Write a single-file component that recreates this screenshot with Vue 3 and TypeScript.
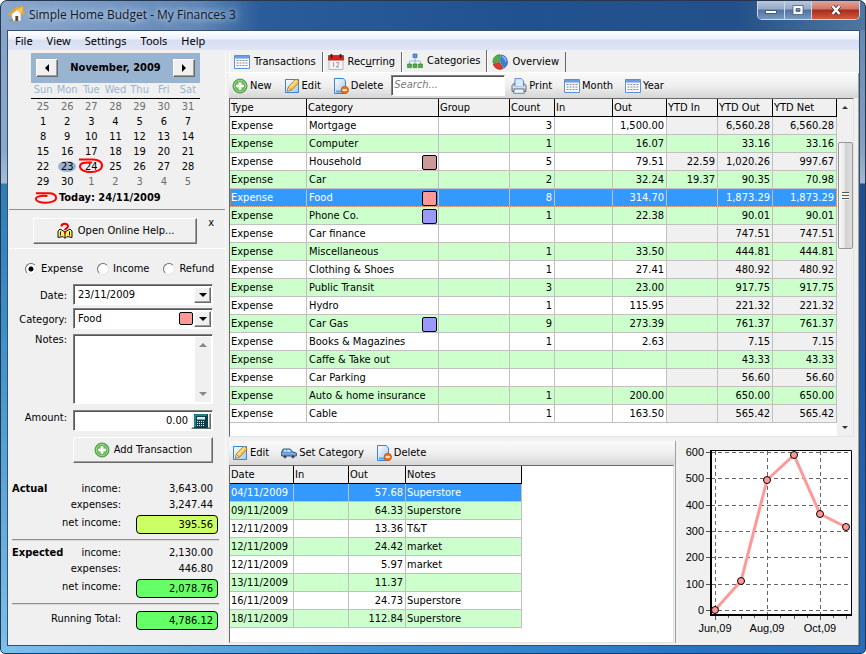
<script setup lang="ts">
import { computed, ref } from 'vue'

interface CategoryRow {
  name: string
  color?: string
  count: string
  out: string
  ytdIn: string
  ytdOut: string
  ytdNet: string
}

interface Entry {
  date: string
  out: string
  notes: string
}

interface Day {
  n: number
  other: boolean
}

const menus = ['File', 'View', 'Settings', 'Tools', 'Help']
const tabs = [
  { id: 'transactions', label: 'Transactions', icon: 'grid' },
  { id: 'recurring', label: 'Recurring', icon: 'calendar' },
  { id: 'categories', label: 'Categories', icon: 'tree' },
  { id: 'overview', label: 'Overview', icon: 'pie' },
]
const activeTab = ref('categories')

const weekdays = ['Sun', 'Mon', 'Tue', 'Wed', 'Thu', 'Fri', 'Sat']
const weeks = computed<Day[][]>(() => {
  const start = new Date(2009, 9, 25)
  return Array.from({ length: 6 }, (_, w) =>
    Array.from({ length: 7 }, (_, d) => {
      const day = new Date(start.getFullYear(), start.getMonth(), start.getDate() + w * 7 + d)
      return { n: day.getDate(), other: day.getMonth() !== 10 }
    }),
  )
})

const kind = ref('Expense')
const notes = ref('')
const amount = ref('0.00')
const search = ref('')
const selectedCategory = ref(4)
const selectedEntry = ref(0)

const row = (name: string, count: string, out: string, ytdIn: string, ytdOut: string, ytdNet: string, color?: string): CategoryRow => ({
  name, count, out, ytdIn, ytdOut, ytdNet, color,
})

const categories: CategoryRow[] = [
  row('Mortgage', '3', '1,500.00', '', '6,560.28', '6,560.28'),
  row('Computer', '1', '16.07', '', '33.16', '33.16'),
  row('Household', '5', '79.51', '22.59', '1,020.26', '997.67', '#cc9999'),
  row('Car', '2', '32.24', '19.37', '90.35', '70.98'),
  row('Food', '8', '314.70', '', '1,873.29', '1,873.29', '#ff9999'),
  row('Phone Co.', '1', '22.38', '', '90.01', '90.01', '#9999ff'),
  row('Car finance', '', '', '', '747.51', '747.51'),
  row('Miscellaneous', '1', '33.50', '', '444.81', '444.81'),
  row('Clothing & Shoes', '1', '27.41', '', '480.92', '480.92'),
  row('Public Transit', '3', '23.00', '', '917.75', '917.75'),
  row('Hydro', '1', '115.95', '', '221.32', '221.32'),
  row('Car Gas', '9', '273.39', '', '761.37', '761.37', '#9999ff'),
  row('Books & Magazines', '1', '2.63', '', '7.15', '7.15'),
  row('Caffe & Take out', '', '', '', '43.33', '43.33'),
  row('Car Parking', '', '', '', '56.60', '56.60'),
  row('Auto & home insurance', '1', '200.00', '', '650.00', '650.00'),
  row('Cable', '1', '163.50', '', '565.42', '565.42'),
]

const entries: Entry[] = [
  { date: '04/11/2009', out: '57.68', notes: 'Superstore' },
  { date: '09/11/2009', out: '64.33', notes: 'Superstore' },
  { date: '12/11/2009', out: '13.36', notes: 'T&T' },
  { date: '12/11/2009', out: '24.42', notes: 'market' },
  { date: '12/11/2009', out: '5.97', notes: 'market' },
  { date: '13/11/2009', out: '11.37', notes: '' },
  { date: '16/11/2009', out: '24.73', notes: 'Superstore' },
  { date: '18/11/2009', out: '112.84', notes: 'Superstore' },
]

const ticks = [
  { v: 600, y: 11 },
  { v: 500, y: 37 },
  { v: 400, y: 64 },
  { v: 300, y: 90 },
  { v: 200, y: 116 },
  { v: 100, y: 143 },
  { v: 0, y: 169 },
]
const months = [
  { label: 'Jun,09', x: 39 },
  { label: 'Aug,09', x: 91 },
  { label: 'Oct,09', x: 144 },
]
const points = [[39, 169], [65, 140], [91, 39], [118, 14], [144, 73], [170, 86]]
const line = points.map((p) => p.join(',')).join(' ')
</script>

<template>
  <svg class="sprite" aria-hidden="true">
    <defs>
      <linearGradient id="pg" x1="0" y1="0" x2="1" y2="1">
        <stop offset="0" stop-color="#fff" /><stop offset="1" stop-color="#9cc8f4" />
      </linearGradient>
      <radialGradient id="gg">
        <stop offset="0" stop-color="#9fdc8c" /><stop offset="1" stop-color="#4ba03c" />
      </radialGradient>
    </defs>
    <symbol id="i-add" viewBox="0 0 16 16">
      <circle cx="8" cy="8" r="7" fill="url(#gg)" stroke="#4a9a42" />
      <circle cx="8" cy="8" r="5.8" fill="none" stroke="#b8e6aa" stroke-width=".8" />
      <path d="M8 4.2v7.6M4.2 8h7.6" stroke="#fff" stroke-width="2.6" />
    </symbol>
    <symbol id="i-edit" viewBox="0 0 16 16">
      <path d="M1.5 1.5h13v13h-13z" fill="url(#pg)" stroke="#3c82d2" />
      <path d="M3.5 13l1-4.2L12 1l3.2 3L8 11.8z" fill="#fcc64a" stroke="#b3761c" stroke-width=".9" />
      <path d="M5.5 9.8l7.4-7.6" stroke="#fff0b0" stroke-width="1.2" />
      <path d="M3.2 13.2l1.1-4 3 2.8z" fill="#f7e3bf" stroke="#8b6a33" stroke-width=".6" />
    </symbol>
    <symbol id="i-delete" viewBox="0 0 16 16">
      <path d="M1.5.5h8.8l2.2 2.6v12.4h-11z" fill="url(#pg)" stroke="#3c82d2" />
      <path d="M3 12.5h6v2H3z" fill="#5c9fe4" />
      <circle cx="11.8" cy="12" r="3.7" fill="#ee7422" stroke="#c4500f" stroke-width=".8" />
      <path d="M9.6 12h4.4" stroke="#fff" stroke-width="1.5" />
    </symbol>
    <symbol id="i-grid" viewBox="0 0 16 16">
      <path d="M.5 1.5h15v13H.5z" fill="#fff" stroke="#5d8fd4" />
      <path d="M1 2h14v2.6H1z" fill="#6c9de0" />
      <path d="M2.5 6.5h11M2.5 9h11M2.5 11.5h11" stroke="#7d8796" stroke-dasharray="2 1" />
      <path d="M5 5v9M8 5v9M11 5v9" stroke="#d4dbe6" stroke-width=".7" />
    </symbol>
    <symbol id="i-calendar" viewBox="0 0 16 16">
      <path d="M1 5h14v10.5H1z" fill="#f4f4f4" stroke="#aaa" stroke-width=".8" />
      <path d="M.5 1.5h15v4.6H.5z" fill="#d92318" stroke="#8d1009" stroke-width=".6" />
      <path d="M3.5 0v4M12.5 0v4" stroke="#222" stroke-width="1.6" />
      <path d="M5.6 8.2v4.8M8 8.6h2.7v1.6L8.3 13H11" fill="none" stroke="#999" />
    </symbol>
    <symbol id="i-tree" viewBox="0 0 16 16">
      <path d="M8 4v4M2.5 11V8h11v3M8 8v3" fill="none" stroke="#7ea0cf" stroke-dasharray="1.5 .7" />
      <path d="M6 1h4v3.6H6z" fill="#5c9ae0" stroke="#2e63ad" stroke-width=".7" />
      <path d="M.6 11h3.8v3.6H.6zM6.1 11h3.8v3.6H6.1zM11.6 11h3.8v3.6h-3.8z" fill="#58ad4d" stroke="#2f7d2b" stroke-width=".7" />
    </symbol>
    <symbol id="i-pie" viewBox="0 0 16 16">
      <path d="M9 1a7 7 0 0 1 3 13L8.5 8z" fill="#3f7fdc" stroke="#1f4fa0" stroke-width=".6" />
      <path d="M7.6 7.6L1 9A7 7 0 0 1 8 .6z" fill="#4fb04a" stroke="#2b7a2b" stroke-width=".6" />
      <path d="M7.6 8.4l3.6 6.2A7 7 0 0 1 1.2 10z" fill="#dc3a30" stroke="#96150f" stroke-width=".6" />
      <path d="M10 2.5a5.5 5.5 0 0 1 3.8 5" fill="none" stroke="#a8ccff" stroke-width="1.3" />
    </symbol>
    <symbol id="i-print" viewBox="0 0 16 16">
      <path d="M1 7.500l2.300-2.500h9.400L15 7.500v6H1z" fill="#b9bcc6" stroke="#5c6273" stroke-width=".9" />
      <path d="M4 8.500V.6h6.400L12.500 3v5.500z" fill="#d8ecff" stroke="#4c84c6" stroke-width=".9" />
      <path d="M1.500 9h13" stroke="#fff" />
      <path d="M3.6 11h8.800l1 4.300H2.600z" fill="#eef5fd" stroke="#5b7ba5" stroke-width=".9" />
    </symbol>
    <symbol id="i-car" viewBox="0 0 16 16">
      <path d="M.6 11V7l1.600-3h7l2.300 2.800 3.900 1.200v3z" fill="#5f93d0" stroke="#2c4f86" stroke-width=".9" />
      <path d="M2.400 6.800l1-2h2v2zM6.200 6.800v-2h2.400l1.500 2z" fill="#dcebfb" />
      <path d="M1 8.800h13.800" stroke="#9dc1ea" stroke-width=".8" />
      <circle cx="4" cy="11.500" r="1.800" fill="#333c4b" stroke="#9fb0c8" stroke-width=".6" />
      <circle cx="12" cy="11.500" r="1.800" fill="#333c4b" stroke="#9fb0c8" stroke-width=".6" />
    </symbol>
  </svg>

  <div class="window">
    <header class="titlebar">
      <svg class="app-icon" viewBox="0 0 16 16" aria-hidden="true">
        <path d="M3.500 8v7h9.500V7.500L9 3.500z" fill="#fbfbf6" stroke="#9aa0a6" stroke-width=".7" />
        <path d="M.8 9.500L7.500 3 14.500 1l.5 8" fill="none" stroke="#f0a526" stroke-width="2" />
        <path d="M8 4l6-2.500v6z" fill="#f7c65a" />
        <path d="M7.400 10h2.800v5H7.400z" fill="#5a4632" />
        <path d="M1 15.300h4v-3L1 14z" fill="#8a9a7a" />
      </svg>
      <h1>Simple Home Budget - My Finances 3</h1>
      <div class="caption-buttons">
        <button type="button" aria-label="Minimize">
          <svg width="14" height="12"><path d="M1.500 6.500h11v3h-11z" fill="#fff" stroke="#4b5a72" /></svg>
        </button>
        <button type="button" aria-label="Maximize">
          <svg width="14" height="12"><path d="M2 1.500h10v9H2zM5 4.500v3h4v-3z" fill="#fff" fill-rule="evenodd" stroke="#4b5a72" stroke-width=".8" /></svg>
        </button>
        <button type="button" class="close" aria-label="Close">
          <svg width="14" height="12"><path d="M3.500 2l7 8M10.500 2l-7 8" stroke="#54323a" stroke-width="4" /><path d="M3.500 2l7 8M10.500 2l-7 8" stroke="#fff" stroke-width="2.400" /></svg>
        </button>
      </div>
    </header>

    <div class="client">
      <nav class="menu">
        <button v-for="m in menus" :key="m" type="button">{{ m }}</button>
      </nav>

      <div class="body">
        <aside class="side">
          <section class="month">
            <div class="month-head">
              <button type="button" class="raised" aria-label="Previous month"><i class="tri left"></i></button>
              <strong>November, 2009</strong>
              <button type="button" class="raised" aria-label="Next month"><i class="tri right"></i></button>
            </div>
            <table class="days">
              <thead>
                <tr><th v-for="w in weekdays" :key="w" scope="col">{{ w }}</th></tr>
              </thead>
              <tbody>
                <tr v-for="(week, i) in weeks" :key="i">
                  <td v-for="d in week" :key="d.n" :class="{ other: d.other, picked: d.n === 23 }">
                    <span>{{ d.n }}</span>
                    <svg v-if="d.n === 24 && !d.other" class="ring" viewBox="0 0 26 16" aria-hidden="true">
                      <path d="M1 1.500h14c6 0 9 3 9 6 0 4-5 6.500-11 6.500S2 12 2 8.500 6 4 14 4.500" />
                    </svg>
                  </td>
                </tr>
              </tbody>
            </table>
            <div class="today">
              <svg viewBox="0 0 26 16" aria-hidden="true">
                <path d="M2 3h13c6 0 8 2 8 5 0 3-5 5-11 5S2 11 2 9s4-4 12-3" />
              </svg>
              <strong>Today: 24/11/2009</strong>
            </div>
          </section>

          <section class="help">
            <button type="button" class="raised help-button">
              <svg width="18" height="18" viewBox="0 0 18 18" aria-hidden="true">
                <path d="M2 9l2-2 5 3 5-3 2 2v6.500l-5-1-2 2-2-2-5 1z" fill="#ffef5a" stroke="#111" />
                <path d="M9 10v6M4.500 9.500v4M13.500 9.500v4" stroke="#111" />
                <path d="M5.500 4.500C5.500 1 12 1 12 4.300c0 2-3 2-3 4M9 9.500v2" fill="none" stroke="#e00" stroke-width="2" />
              </svg>
              Open Online Help...
            </button>
            <button type="button" class="dismiss" aria-label="Close help">x</button>
          </section>

          <form class="entry" @submit.prevent>
            <div class="kinds">
              <label v-for="k in ['Expense', 'Income', 'Refund']" :key="k">
                <input v-model="kind" type="radio" name="kind" :value="k" />{{ k }}
              </label>
            </div>
            <label for="date">Date:</label>
            <div class="field sunken">
              <select id="date"><option>23/11/2009</option></select>
              <span class="raised drop"><i class="tri down"></i></span>
            </div>
            <label for="category">Category:</label>
            <div class="field sunken">
              <select id="category"><option>Food</option></select>
              <span class="swatch food"></span>
              <span class="raised drop"><i class="tri down"></i></span>
            </div>
            <label for="notes" class="top">Notes:</label>
            <div class="field notes sunken">
              <textarea id="notes" v-model="notes"></textarea>
              <span class="bar"><i class="tri up"></i><i class="tri down"></i></span>
            </div>
            <label for="amount" class="top">Amount:</label>
            <div class="field sunken">
              <input id="amount" v-model="amount" type="text" />
              <button type="button" class="raised calc" aria-label="Calculator">
                <svg width="14" height="14" viewBox="0 0 14 14">
                  <path d="M0 0h14v14H0z" fill="#0a3f49" />
                  <path d="M1 13V1h12" fill="none" stroke="#2ec4cc" />
                  <path d="M3 3h8v2.500H3z" fill="#d5f2f2" />
                  <path d="M3 7.500h8M3 9.500h8M3 11.500h8" stroke="#e8f6f6" stroke-dasharray="1 1" />
                </svg>
              </button>
            </div>
            <button type="submit" class="raised add">
              <svg class="icon"><use href="#i-add" /></svg>Add Transaction
            </button>
          </form>

          <section class="totals">
            <dl>
              <dt><strong>Actual</strong>income:</dt><dd>3,643.00</dd>
              <dt>expenses:</dt><dd>3,247.44</dd>
              <dt>net income:</dt><dd class="pill lime">395.56</dd>
            </dl>
            <dl>
              <dt><strong>Expected</strong>income:</dt><dd>2,130.00</dd>
              <dt>expenses:</dt><dd>446.80</dd>
              <dt>net income:</dt><dd class="pill">2,078.76</dd>
            </dl>
            <dl>
              <dt>Running Total:</dt><dd class="pill">4,786.12</dd>
            </dl>
          </section>
        </aside>

        <main class="main">
          <div class="tabs" role="tablist">
            <button
              v-for="t in tabs" :key="t.id" type="button" role="tab"
              :aria-selected="activeTab === t.id" :class="{ active: activeTab === t.id }" @click="activeTab = t.id"
            >
              <svg class="icon"><use :href="'#i-' + t.icon" /></svg>
              <span v-if="t.id === 'recurring'">Rec<u>u</u>rring</span>
              <span v-else>{{ t.label }}</span>
            </button>
          </div>

          <div class="page">
            <div class="toolbar">
              <button type="button"><svg class="icon"><use href="#i-add" /></svg>New</button>
              <button type="button"><svg class="icon"><use href="#i-edit" /></svg>Edit</button>
              <button type="button"><svg class="icon"><use href="#i-delete" /></svg>Delete</button>
              <input v-model="search" type="text" class="search sunken" placeholder="Search..." aria-label="Search" />
              <button type="button"><svg class="icon"><use href="#i-print" /></svg>Print</button>
              <button type="button"><svg class="icon"><use href="#i-grid" /></svg>Month</button>
              <button type="button"><svg class="icon"><use href="#i-grid" /></svg>Year</button>
            </div>

            <div class="list upper">
              <div class="scroll">
                <table class="grid">
                  <colgroup>
                    <col class="w77" /><col class="w132" /><col class="w71" /><col class="w45" /><col class="w58" />
                    <col class="w54" /><col class="w51" /><col class="w55" /><col class="w64" />
                  </colgroup>
                  <thead>
                    <tr>
                      <th v-for="h in ['Type', 'Category', 'Group', 'Count', 'In', 'Out', 'YTD In', 'YTD Out', 'YTD Net']" :key="h" scope="col">{{ h }}</th>
                    </tr>
                  </thead>
                  <tbody>
                    <tr v-for="(c, i) in categories" :key="c.name" :class="{ selected: i === selectedCategory }" @click="selectedCategory = i">
                      <td>Expense</td>
                      <td class="name"><div class="cat">{{ c.name }}<span v-if="c.color" class="swatch" :style="{ background: c.color }"></span></div></td>
                      <td></td>
                      <td class="num">{{ c.count }}</td>
                      <td></td>
                      <td class="num">{{ c.out }}</td>
                      <td class="num ytd">{{ c.ytdIn }}</td>
                      <td class="num ytd">{{ c.ytdOut }}</td>
                      <td class="num ytd">{{ c.ytdNet }}</td>
                    </tr>
                  </tbody>
                </table>
              </div>
              <div class="scrollbar" aria-hidden="true">
                <i class="tri up"></i>
                <span class="track"><span class="thumb"><i></i></span></span>
                <i class="tri down"></i>
              </div>
            </div>

            <div class="bottom">
              <section class="details">
                <div class="toolbar">
                  <button type="button"><svg class="icon"><use href="#i-edit" /></svg>Edit</button>
                  <button type="button"><svg class="icon"><use href="#i-car" /></svg>Set Category</button>
                  <button type="button"><svg class="icon"><use href="#i-delete" /></svg>Delete</button>
                </div>
                <div class="list">
                  <table class="grid narrow">
                    <colgroup><col class="w64" /><col class="w55" /><col class="w57" /><col class="w116" /></colgroup>
                    <thead>
                      <tr><th v-for="h in ['Date', 'In', 'Out', 'Notes']" :key="h" scope="col">{{ h }}</th></tr>
                    </thead>
                    <tbody>
                      <tr v-for="(e, i) in entries" :key="i" :class="{ selected: i === selectedEntry }" @click="selectedEntry = i">
                        <td>{{ e.date }}</td>
                        <td></td>
                        <td class="num">{{ e.out }}</td>
                        <td>{{ e.notes }}</td>
                      </tr>
                    </tbody>
                  </table>
                </div>
              </section>

              <figure class="chart">
                <svg viewBox="0 0 182 200" role="img" aria-label="Monthly spending on Food">
                  <path d="M34 9h142v165H34z" fill="#fff" />
                  <g stroke="#666" stroke-dasharray="4 3" shape-rendering="crispEdges">
                    <path v-for="t in ticks" :key="t.v" :d="`M35 ${t.y}.5h141`" />
                    <path v-for="m in months" :key="m.x" :d="`M${m.x}.5 10v163`" />
                  </g>
                  <g stroke="#555" shape-rendering="crispEdges">
                    <path v-for="t in ticks" :key="t.v" :d="`M30 ${t.y}.5h5`" />
                    <path d="M39.500 174v5M52.500 174v3M65.500 174v4M78.500 174v3M91.500 174v5M104.500 174v3M118.500 174v4M131.500 174v3M144.500 174v5M157.500 174v3M170.500 174v4" />
                  </g>
                  <path d="M34 9.500h141.500V174" fill="none" stroke="#000" />
                  <path d="M35 9v165h141" fill="none" stroke="#000" stroke-width="2" />
                  <polyline :points="line" fill="none" stroke="#ff9999" stroke-width="3" />
                  <circle v-for="p in points" :key="p[0]" :cx="p[0]" :cy="p[1]" r="3.500" fill="#ff9999" stroke="#000" />
                  <text v-for="t in ticks" :key="t.v" x="28" :y="t.y + 4" text-anchor="end">{{ t.v }}</text>
                  <text v-for="m in months" :key="m.x" :x="m.x" y="191" text-anchor="middle">{{ m.label }}</text>
                </svg>
              </figure>
            </div>
          </div>
        </main>
      </div>
    </div>
  </div>
</template>

<style>
body {
  margin: 0;
  background: #fff;
}
</style>

<style scoped>
* {
  box-sizing: border-box;
}

.sprite {
  position: absolute;
  width: 0;
  height: 0;
}

.window {
  display: flex;
  flex-direction: column;
  min-height: 100vh;
  padding: 0 5px 7px 6px;
  border: 1px solid #26364e;
  border-radius: 7px 7px 5px 5px;
  background:
    linear-gradient(90deg, #8aa8cc 0, #7295c0 120px, #5f86b6 200px, #2a5c9a 260px, #21528f 60%, #23508a 85%, #4f779f) 0 0 / 100% 29px no-repeat,
    linear-gradient(90deg, #7cc0ea, #3d90d6 45%, #2873c2 80%, #2a6cba) 0 100% / 100% 8px no-repeat,
    linear-gradient(#86a3c6, #8aa8cb 150px, #a9bdd6 182px, #2e7db5 183px, #3b8fc8 50%, #7cc0ea) 0 0 / 50% 100% no-repeat,
    linear-gradient(#5d83ae, #86a2c4 150px, #a3b8d1 182px, #1d4f90 183px, #1f5aa5 60%, #2a6cba) 100% 0 / 50% 100% no-repeat;
  color: #000;
  font: 11px/14px "DejaVu Sans Condensed", "DejaVu Sans", sans-serif;
}

button,
input,
select,
textarea {
  margin: 0;
  padding: 0;
  border: 0;
  border-radius: 0;
  outline: 0;
  background: none;
  color: inherit;
  font: inherit;
}

.icon {
  flex: none;
  width: 16px;
  height: 16px;
}

.titlebar {
  display: flex;
  align-items: flex-start;
  height: 29px;
}

.app-icon {
  flex: none;
  width: 16px;
  height: 16px;
  margin: 5px 5px 0 1px;
}

h1 {
  flex: 1;
  margin: 5px 0 0;
  color: #10182a;
  font: 12px/17px "Open Sans", sans-serif;
  text-shadow: 0 0 6px #c9d8ea, 0 0 8px #c9d8ea;
}

.caption-buttons {
  display: flex;
  border: 1px solid #cdd8e6;
  border-top: 0;
  border-radius: 0 0 5px 5px;
  overflow: hidden;
}

.caption-buttons button {
  display: grid;
  place-items: center;
  width: 27px;
  height: 18px;
  border-right: 1px solid #cdd8e6;
  background: linear-gradient(#b9c8dc, #93aac8 45%, #4f729f 50%, #7698c0);
}

.caption-buttons .close {
  width: 47px;
  border-right: 0;
  background: linear-gradient(#dda79c, #cf7565 45%, #a92a1c 50%, #cf5c3c);
}

.client {
  display: flex;
  flex: 1;
  flex-direction: column;
  border: 1px solid #35506f;
  background: #f0f0f0;
}

.menu {
  display: flex;
  gap: 14px;
  height: 19px;
  padding-left: 7px;
  background: linear-gradient(#fff, #eef1fa 40%, #d8dff2 50%, #dfe5f6);
  font: 11px/19px "Noto Sans", sans-serif;
}

.body {
  display: flex;
  flex: 1;
}

.side {
  flex: none;
  width: 218px;
  padding-left: 1px;
  border-right: 1px solid #fafafa;
}

.raised {
  border: 1px solid;
  border-color: #fff #696969 #696969 #fff;
  background: #f0f0f0;
  box-shadow: inset -1px -1px #a0a0a0;
}

.sunken {
  border: 1px solid;
  border-color: #808080 #fff #fff #808080;
  background: #fff;
  box-shadow: inset 1px 1px #555;
}

.tri {
  display: block;
  width: 0;
  height: 0;
  border: 4px solid transparent;
}

.tri.left {
  border-left-width: 0;
  border-right-color: #000;
}

.tri.right {
  border-right-width: 0;
  border-left-color: #000;
}

.tri.down {
  border-bottom-width: 0;
  border-top-color: #000;
}

.tri.up {
  border-top-width: 0;
  border-bottom-color: #000;
}

.month {
  width: 169px;
  margin: 3px 0 0 22px;
}

.month-head {
  display: flex;
  align-items: center;
  justify-content: space-between;
  height: 30px;
  padding: 0 5px;
  background: #99b4d1;
}

.month-head button {
  display: grid;
  place-items: center;
  width: 22px;
  height: 18px;
}

.days {
  width: 169px;
  border-collapse: collapse;
  table-layout: fixed;
}

.days th {
  height: 15px;
  padding: 0;
  border-bottom: 1px solid #000;
  color: #99b4d1;
  font-weight: normal;
  line-height: 14px;
}

.days td {
  position: relative;
  height: 15px;
  padding: 0;
  line-height: 15px;
  text-align: center;
}

.days .other {
  color: #6d6d6d;
}

.days .picked span {
  display: inline-block;
  width: 18px;
  height: 11px;
  border-radius: 50%;
  background: #99b4d1;
  line-height: 11px;
}

.ring {
  position: absolute;
  top: -1px;
  left: -1px;
  width: 26px;
  height: 16px;
}

.ring path,
.today path {
  fill: none;
  stroke: #f00;
  stroke-width: 2;
}

.today {
  display: flex;
  align-items: center;
  height: 18px;
  padding-left: 3px;
}

.today svg {
  width: 25px;
  height: 16px;
}

.help {
  display: flex;
  align-items: flex-start;
  height: 40px;
  margin-top: 2px;
  padding: 8px 0 0 24px;
  border-top: 1px solid #909090;
  border-bottom: 1px solid #fff;
}

.help-button {
  display: flex;
  align-items: center;
  justify-content: center;
  gap: 4px;
  width: 166px;
  height: 26px;
}

.dismiss {
  width: 28px;
  height: 10px;
  line-height: 8px;
}

.entry {
  display: grid;
  grid-template-columns: 58px 140px;
  column-gap: 6px;
  row-gap: 3px;
  padding: 11px 0 0;
  text-align: right;
}

.entry > label {
  padding-top: 5px;
}

.entry > label.top {
  padding-top: 1px;
}

.kinds {
  display: flex;
  grid-column: 1 / -1;
  gap: 14px;
  height: 21px;
  padding: 0 0 3px 16px;
}

.kinds label {
  display: flex;
  align-items: center;
  gap: 4px;
}

.kinds input {
  width: 12px;
  height: 12px;
  border: 1px solid;
  border-color: #707070 #e4e4e4 #e4e4e4 #707070;
  border-radius: 50%;
  background: #fff;
  appearance: none;
}

.kinds input:checked {
  background: radial-gradient(#000 2px, #fff 3px);
}

.field {
  display: flex;
  align-items: stretch;
  height: 21px;
  padding: 2px 1px 1px 2px;
}

.field select,
.field input,
.field textarea {
  flex: 1;
  min-width: 0;
  padding: 0 2px;
  appearance: none;
  resize: none;
}

#amount {
  padding-right: 3px;
  text-align: right;
}

.drop {
  display: grid;
  place-items: center;
  width: 17px;
}

.notes {
  height: 70px;
  margin: 2px 0 3px;
}

.bar {
  display: flex;
  flex-direction: column;
  justify-content: space-between;
  align-items: center;
  width: 16px;
  padding: 6px 0;
  background: #f0f0f0;
}

.bar .up {
  border-bottom-color: #888;
}

.bar .down {
  border-top-color: #888;
}

.calc {
  display: grid;
  place-items: center;
  width: 20px;
}

.swatch {
  flex: none;
  width: 15px;
  height: 15px;
  border: 1px solid #000;
  border-radius: 2px;
}

.swatch.food {
  align-self: center;
  width: 14px;
  height: 13px;
  margin-right: 1px;
  background: #ff9999;
}

.add {
  display: flex;
  grid-column: 2;
  align-items: center;
  justify-content: center;
  gap: 4px;
  height: 26px;
  margin-top: 3px;
}

.totals {
  padding: 18px 6px 0 3px;
}

.totals dl {
  display: grid;
  grid-template-columns: 109px 82px;
  column-gap: 15px;
  align-items: center;
  margin: 0;
  padding-bottom: 5px;
}

.totals dl + dl {
  padding-top: 5px;
  border-top: 1px solid #909090;
  box-shadow: inset 0 1px #d8d8d8;
}

.totals dt {
  display: flex;
  justify-content: flex-end;
  line-height: 16px;
}

.totals dt strong {
  margin-right: auto;
}

.totals dd {
  margin: 0;
  padding-right: 5px;
  line-height: 16px;
  text-align: right;
}

.totals .pill {
  height: 19px;
  margin: 2px 0 0;
  padding-right: 4px;
  border: 1px solid #000;
  border-radius: 4px;
  background: #66ff66;
  line-height: 17px;
}

.totals .lime {
  background: #ccff66;
}

.main {
  display: flex;
  flex: 1;
  flex-direction: column;
  min-width: 0;
}

.tabs {
  display: flex;
  align-items: flex-end;
  height: 23px;
  padding-left: 3px;
  border-bottom: 1px solid #fff;
}

.tabs button {
  display: flex;
  align-items: center;
  gap: 4px;
  height: 20px;
  padding: 0 6px 0 4px;
  border: solid #696969;
  border-width: 0 1px 0 0;
  border-left: 1px solid #fff;
}

.tabs .active {
  align-self: flex-start;
  height: 22px;
}

.page {
  display: flex;
  flex: 1;
  flex-direction: column;
  padding: 0 0 2px 3px;
  border-right: 1px solid #a0a0a0;
}

.toolbar {
  display: flex;
  flex: none;
  align-items: center;
  gap: 12px;
  height: 25px;
  padding: 0 3px;
  background: linear-gradient(#fafafa, #efefef 50%, #d6d6d6);
}

.toolbar button {
  display: flex;
  align-items: center;
  gap: 2px;
  white-space: nowrap;
}

.search {
  width: 114px;
  height: 21px;
  margin: 0 -6px 0 -4px;
  padding: 0 2px 2px;
}

.search::placeholder {
  color: #777;
  font-style: italic;
  opacity: 1;
}

.list {
  flex: 1;
  border: 1px solid;
  border-color: #696969 #e3e3e3 #e3e3e3 #696969;
  background: #fff;
}

.upper {
  display: flex;
  min-height: 339px;
  margin-right: 4px;
}

.scroll {
  flex: 1;
  min-width: 0;
}

.grid {
  width: 100%;
  border-spacing: 0;
  table-layout: fixed;
}

.grid.narrow {
  width: 292px;
}

.w77 { width: 77px; }
.w132 { width: 132px; }
.w71 { width: 71px; }
.w45 { width: 45px; }
.w58 { width: 58px; }
.w54 { width: 54px; }
.w51 { width: 51px; }
.w55 { width: 55px; }
.w57 { width: 57px; }
.w64 { width: 64px; }
.w116 { width: 116px; }

.grid th,
.grid td {
  height: 18px;
  padding: 1px 2px 0 1px;
  line-height: 16px;
  white-space: nowrap;
}

.grid th {
  border-right: 1px solid #000;
  border-bottom: 1px solid #000;
  background: #f0f0f0;
  font-weight: normal;
  text-align: left;
}

.grid td {
  border-right: 1px solid #c0c0c0;
  border-bottom: 1px solid #c0c0c0;
}

.grid .num {
  text-align: right;
}

.grid .name {
  padding-right: 1px;
}

.upper .ytd {
  background: #f0f0f0;
}

.grid tbody tr:nth-child(even) td {
  background: #ccffcc;
}

.grid tbody tr.selected td {
  background: #3399ff;
  color: #fff;
}

.upper tr.selected {
  outline: 1px dotted #e08030;
  outline-offset: -1px;
}

.cat {
  display: flex;
  align-items: center;
  justify-content: space-between;
  height: 16px;
  padding-left: 1px;
}

.scrollbar {
  display: flex;
  flex: none;
  flex-direction: column;
  align-items: center;
  width: 16px;
  padding: 7px 0;
  background: #f0f0f0;
}

.scrollbar .tri {
  border-right-width: 3px;
  border-left-width: 3px;
}

.scrollbar .up {
  border-bottom: 3px solid #333;
}

.scrollbar .down {
  border-top: 3px solid #333;
}

.track {
  display: flex;
  flex: 1;
  flex-direction: column;
  align-self: stretch;
  padding: 33px 0 0 1px;
}

.thumb {
  display: grid;
  place-items: center;
  height: 107px;
  border: 1px solid #979797;
  border-radius: 2px;
  background: linear-gradient(90deg, #f8f8f8, #e8e8e8 45%, #d2d2d2 50%, #dedede);
}

.thumb i {
  width: 7px;
  height: 8px;
  background: repeating-linear-gradient(#555 0 1px, #f4f4f4 1px 3px);
}

.bottom {
  display: flex;
  flex: 1;
  padding-top: 4px;
}

.details {
  display: flex;
  flex: 1;
  flex-direction: column;
  min-width: 0;
  border-right: 1px solid #a0a0a0;
}

.details .toolbar {
  height: 24px;
}

.details .list {
  margin-right: 1px;
}

.chart {
  width: 182px;
  margin: 0;
}

.chart svg {
  display: block;
  width: 100%;
}

.chart text {
  font: 11px "Liberation Sans", sans-serif;
}
</style>
